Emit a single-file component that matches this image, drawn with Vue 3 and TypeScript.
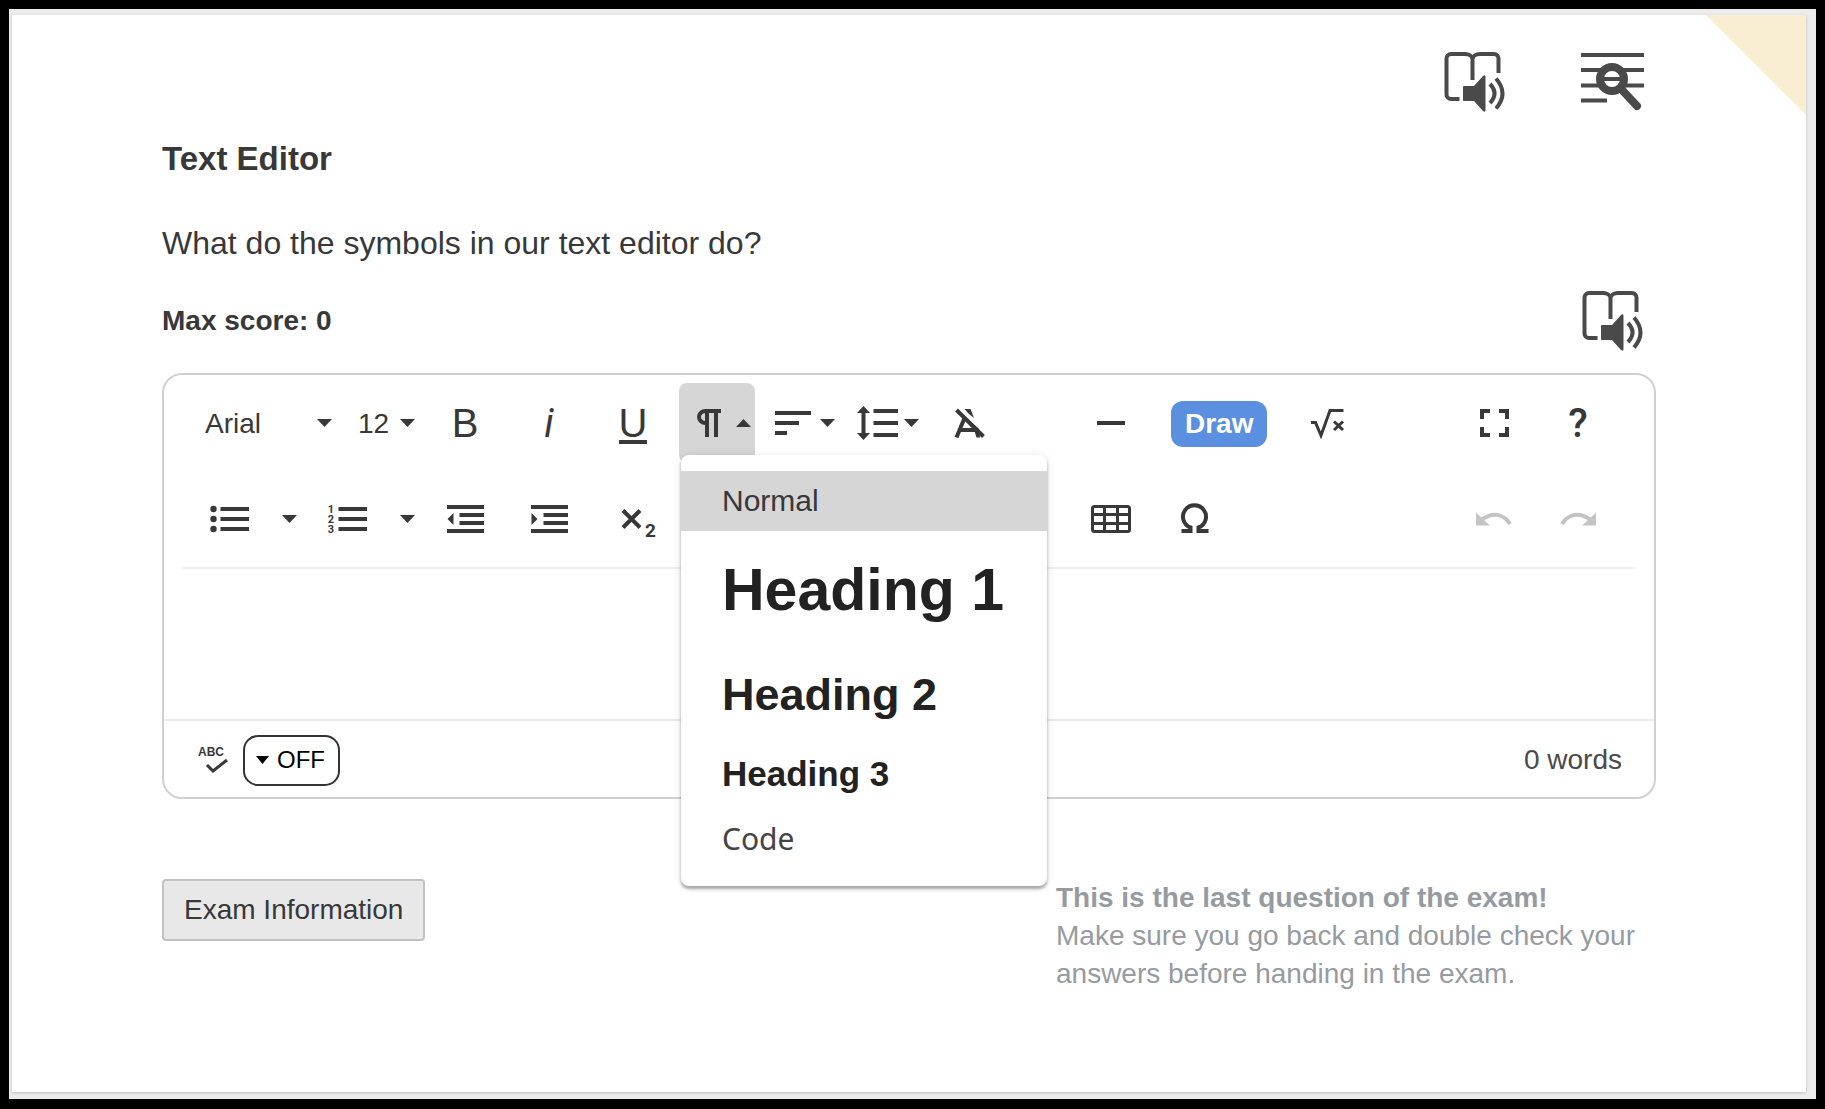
<script setup lang="ts">
import { ref } from 'vue'

interface ParagraphFormat {
  id: string
  label: string
}

const formats: ParagraphFormat[] = [
  { id: 'normal', label: 'Normal' },
  { id: 'h1', label: 'Heading 1' },
  { id: 'h2', label: 'Heading 2' },
  { id: 'h3', label: 'Heading 3' },
  { id: 'code', label: 'Code' },
]

const activeFormat = ref('normal')
const menuOpen = ref(true)
const font = ref('Arial')
const size = ref('12')

function pick(id: string): void {
  activeFormat.value = id
}
</script>

<template>
  <div class="frame">
    <main class="card">
      <div class="corner" aria-hidden="true"></div>

      <header class="tools">
        <button type="button" class="plain" aria-label="Read page aloud">
          <svg width="62" height="62" viewBox="0 0 62 62">
            <path class="ln" d="M15.500 48H7a4.500 4.500 0 0 1-4.500-4.500V7.500A4.500 4.500 0 0 1 7 3h14c4 0 7 2 7.500 5 .5-3 3.500-5 7.500-5h14a4.500 4.500 0 0 1 4.500 4.500V22M28.500 7v22M46 33q9 9.500 0 19M52 27.500q13 15 0 30" />
            <path class="solid" d="M20 35h10l9-10q2.500-2 2.500 1v33q0 3-2.500 1l-9-10H20q-1 0-1-1V36q0-1 1-1z" />
          </svg>
        </button>
        <button type="button" class="plain" aria-label="Search in text">
          <svg width="63" height="62" viewBox="0 0 63 62">
            <path class="ln" d="M0 4h63M0 19h63M0 34.500h63M0 49.500h26" />
            <circle cx="31" cy="28" r="12" fill="#fff" stroke="#4a4a4a" stroke-width="8" />
            <path class="ln" d="M22 28h18" />
            <path d="M42 40l14 15" fill="none" stroke="#4a4a4a" stroke-width="8" stroke-linecap="round" />
          </svg>
        </button>
      </header>

      <h1>Text Editor</h1>
      <p class="question">What do the symbols in our text editor do?</p>

      <div class="score">
        <strong>Max score: 0</strong>
        <button type="button" class="plain" aria-label="Read question aloud">
          <svg width="62" height="62" viewBox="0 0 62 62">
            <path class="ln" d="M15.500 48H7a4.500 4.500 0 0 1-4.500-4.500V7.500A4.500 4.500 0 0 1 7 3h14c4 0 7 2 7.500 5 .5-3 3.500-5 7.500-5h14a4.500 4.500 0 0 1 4.500 4.500V22M28.500 7v22M46 33q9 9.500 0 19M52 27.500q13 15 0 30" />
            <path class="solid" d="M20 35h10l9-10q2.500-2 2.500 1v33q0 3-2.500 1l-9-10H20q-1 0-1-1V36q0-1 1-1z" />
          </svg>
        </button>
      </div>

      <section class="editor">
        <div class="toolbar">
          <div class="group">
            <label class="pick pick-font">
              <select v-model="font" aria-label="Font family">
                <option>Arial</option>
                <option>Georgia</option>
              </select>
              <svg class="caret" width="15" height="8" viewBox="0 0 15 8"><path d="M0 0h15L7.500 8z" /></svg>
            </label>
            <label class="pick pick-size">
              <select v-model="size" aria-label="Font size">
                <option>12</option>
                <option>14</option>
              </select>
              <svg class="caret" width="15" height="8" viewBox="0 0 15 8"><path d="M0 0h15L7.500 8z" /></svg>
            </label>
            <button type="button" class="cell" aria-label="Bold">
              <svg width="48" height="48"><text x="24" y="38" class="glyph letter">B</text></svg>
            </button>
            <button type="button" class="cell" aria-label="Italic">
              <svg width="48" height="48"><text x="24" y="38" class="glyph italic">i</text></svg>
            </button>
            <button type="button" class="cell" aria-label="Underline">
              <svg width="48" height="48">
                <text x="24" y="38" class="glyph letter">U</text>
                <path class="s4" d="M10 43h28" />
              </svg>
            </button>
            <div class="format">
              <button type="button" class="wide open" aria-label="Paragraph format" aria-haspopup="listbox" :aria-expanded="menuOpen" @click="menuOpen = !menuOpen">
                <svg width="76" height="48">
                  <path class="s4" d="M42 12H26.500a6.500 6 0 0 0 0 12H28M28 12v26M37 12v26" />
                  <path class="fill" d="M57 28h15l-7.500-8z" />
                </svg>
              </button>
              <ul v-if="menuOpen" class="menu" role="listbox" aria-label="Paragraph format">
                <li v-for="f in formats" :key="f.id">
                  <button type="button" role="option" :class="['item', f.id, { active: f.id === activeFormat }]" :aria-selected="f.id === activeFormat" @click="pick(f.id)">{{ f.label }}</button>
                </li>
              </ul>
            </div>
            <button type="button" class="wide" aria-label="Align">
              <svg width="76" height="48">
                <path class="s4" d="M12 14h36M12 24h24M12 34h12" />
                <path class="fill" d="M57 20h15l-7.500 8z" />
              </svg>
            </button>
            <button type="button" class="wide" aria-label="Line height">
              <svg width="76" height="48">
                <path class="s4" d="M26.500 12H51M26.500 24H51M26.500 36H51M16.500 12v24" />
                <path class="fill" d="M10 14l6.500-7 6.500 7zM10 34l6.500 7 6.500-7zM57 20h15l-7.500 8z" />
              </svg>
            </button>
            <button type="button" class="cell" aria-label="Clear formatting">
              <svg width="48" height="48">
                <path class="s4" d="M11.500 38.500l8-19.500M15.500 31h17" />
                <path class="fill" d="M19.500 10h6l3.500 9-5-4zM27 24l7 6 1 8.500h-3.500z" />
                <path class="s4" d="M11.500 11l27 26.500" />
              </svg>
            </button>
          </div>
          <div class="group">
            <button type="button" class="cell" aria-label="Horizontal line">
              <svg width="48" height="48"><path class="s4" d="M10 24h28" /></svg>
            </button>
            <button type="button" class="draw">Draw</button>
            <button type="button" class="cell" aria-label="Formula">
              <svg width="48" height="48">
                <path class="s3" d="M8 23.500h4.500l5.500 13 9-25H40.500M31 22.500l9 8.500M40 22.500L31 31" />
              </svg>
            </button>
          </div>
          <div class="group">
            <button type="button" class="cell" aria-label="Fullscreen">
              <svg width="48" height="48"><path class="s4" d="M12 20v-8h8M29 12h8v8M37 28v8h-8M20 36h-8v-8" /></svg>
            </button>
            <button type="button" class="cell" aria-label="Help">
              <svg width="48" height="48"><text x="24" y="38" class="glyph">?</text></svg>
            </button>
          </div>

          <div class="group">
            <button type="button" class="cell" aria-label="Bullet list">
              <svg width="48" height="48">
                <path class="s4" d="M15.500 14H44M15.500 24H44M15.500 34H44" />
                <circle cx="8.500" cy="14" r="3.200" /><circle cx="8.500" cy="24" r="3.200" /><circle cx="8.500" cy="34" r="3.200" />
              </svg>
            </button>
            <button type="button" class="drop" aria-label="Bullet styles">
              <svg width="15" height="8" viewBox="0 0 15 8"><path class="fill" d="M0 0h15L7.500 8z" /></svg>
            </button>
            <button type="button" class="cell" aria-label="Numbered list">
              <svg width="48" height="48">
                <path class="s4" d="M15.500 14H44M15.500 24H44M15.500 34H44" />
                <text x="8" y="18" class="digit">1</text><text x="8" y="28" class="digit">2</text><text x="8" y="38" class="digit">3</text>
              </svg>
            </button>
            <button type="button" class="drop" aria-label="Number styles">
              <svg width="15" height="8" viewBox="0 0 15 8"><path class="fill" d="M0 0h15L7.500 8z" /></svg>
            </button>
            <button type="button" class="cell" aria-label="Decrease indent">
              <svg width="48" height="48">
                <path class="s4" d="M6 12h37M18.500 20H43M18.500 28H43M6 36h37" />
                <path class="fill" d="M6.500 24l6-6v12z" />
              </svg>
            </button>
            <button type="button" class="cell" aria-label="Increase indent">
              <svg width="48" height="48">
                <path class="s4" d="M6 12h37M18.500 20H43M18.500 28H43M6 36h37" />
                <path class="fill" d="M12.500 24l-6-6v12z" />
              </svg>
            </button>
            <button type="button" class="cell" aria-label="Subscript">
              <svg width="48" height="48">
                <path class="s4" d="M14 15.500l17 17M31 15.500l-17 17" />
                <text x="41.500" y="42" class="sub">2</text>
              </svg>
            </button>
          </div>
          <div class="group">
            <button type="button" class="cell" aria-label="Table">
              <svg width="48" height="48">
                <rect x="5.500" y="11.500" width="37" height="25" rx="2" class="s3" />
                <path class="s3" d="M17.500 11v26M30.500 11v26M5 19.500h38M5 28.500h38" />
              </svg>
            </button>
            <button type="button" class="cell" aria-label="Special characters">
              <svg width="48" height="48"><path class="s4" d="M10.500 36h9v-3.500a11.500 11.500 0 1 1 8 0V36H37.500" /></svg>
            </button>
          </div>
          <div class="group">
            <button type="button" class="cell" aria-label="Undo" disabled>
              <svg width="48" height="48">
                <path class="faint" d="M11 25q14-10 25-1 2 2 4 5" />
                <path class="faint-fill" d="M6 17.500l14 13H6z" />
              </svg>
            </button>
            <button type="button" class="cell" aria-label="Redo" disabled>
              <svg width="48" height="48">
                <path class="faint" d="M37 25q-14-10-25-1-2 2-4 5" />
                <path class="faint-fill" d="M42 17.500l-14 13h14z" />
              </svg>
            </button>
          </div>
        </div>

        <textarea class="area" aria-label="Answer"></textarea>

        <footer class="status">
          <div class="spell">
            <span class="abc">ABC</span>
            <svg width="24" height="16" viewBox="0 0 24 16"><path class="s3" d="M2 7l6 6L22 2" /></svg>
          </div>
          <button type="button" class="off" aria-haspopup="listbox">
            <svg width="13" height="8" viewBox="0 0 13 8"><path d="M0 0h13L6.500 8z" /></svg>
            OFF
          </button>
          <span class="words">0 words</span>
        </footer>
      </section>

      <div class="bottom">
        <button type="button" class="info">Exam Information</button>
        <p class="note">
          <strong>This is the last question of the exam!</strong><br />
          Make sure you go back and double check your answers before handing in the exam.
        </p>
      </div>
    </main>
  </div>
</template>

<style>
body {
  margin: 0;
  background: #000;
}
</style>

<style scoped>
.frame {
  box-sizing: border-box;
  display: flex;
  min-height: 100vh;
  padding: 6px 10px 7px 3px;
  border: 9px solid #000;
  border-bottom-width: 10px;
  background: #ececec;
  font-family: "Liberation Sans", Arial, sans-serif;
  color: #383838;
}
.card {
  position: relative;
  flex: 1;
  padding: 36px 150px 0;
  background: #fff;
  box-shadow: 0 1px 3px rgba(0, 0, 0, 0.2);
}
.corner {
  position: absolute;
  top: 0;
  right: 0;
  width: 100px;
  height: 100px;
  background: #f9edd2;
  clip-path: polygon(0 0, 100% 0, 100% 100%);
}
button,
select {
  font-family: inherit;
  color: inherit;
}
svg {
  display: block;
  flex: none;
}
.plain {
  padding: 0;
  border: 0;
  background: none;
}
.ln {
  fill: none;
  stroke: #4a4a4a;
  stroke-width: 4px;
}
.solid {
  fill: #4a4a4a;
}
.tools {
  display: flex;
  justify-content: flex-end;
  gap: 75px;
  padding-right: 12px;
}
h1 {
  margin: 26px 0 0;
  font-size: 33px;
  line-height: 40px;
}
.question {
  margin: 44px 0 0;
  font-size: 32px;
  line-height: 40px;
}
.score {
  display: flex;
  align-items: center;
  justify-content: space-between;
  margin-top: 27px;
  padding-right: 12px;
  font-size: 28px;
}
.editor {
  margin-top: 21px;
  border: 2px solid #d0d0d0;
  border-radius: 20px;
}
.toolbar {
  display: grid;
  grid-template-columns: auto 1fr auto;
  column-gap: 58px;
  margin: 0 18px;
  padding: 0 16px 0 5px;
  border-bottom: 2px solid #f0f0f0;
}
.group {
  display: flex;
  align-items: center;
  height: 96px;
}
.cell,
.wide,
.drop {
  display: flex;
  align-items: center;
  justify-content: center;
  width: 84px;
  height: 80px;
  padding: 0;
  border: 0;
  background: none;
}
.wide {
  width: 76px;
  margin: 0 4px;
  border-radius: 8px;
}
.drop {
  width: 34px;
  padding-left: 2px;
}
.open {
  background: #d6d6d6;
}
.s4,
.s3 {
  fill: none;
  stroke: #383838;
  stroke-width: 4px;
}
.s3 {
  stroke-width: 3px;
}
.fill,
.cell circle,
.caret {
  fill: #383838;
}
.faint {
  fill: none;
  stroke: #c4c4c4;
  stroke-width: 4px;
}
.faint-fill {
  fill: #c4c4c4;
}
.glyph,
.digit,
.sub {
  fill: #383838;
  font-family: Roboto, sans-serif;
  font-size: 40px;
  font-weight: 500;
  text-anchor: middle;
}
.letter {
  font-family: "Liberation Sans", Arial, sans-serif;
  font-weight: 400;
}
.italic {
  font-style: italic;
  font-weight: 400;
}
.digit {
  font-size: 11px;
  font-weight: 700;
}
.sub {
  font-size: 19px;
  font-weight: 700;
}
.pick {
  display: grid;
  align-items: center;
}
.pick > * {
  grid-area: 1 / 1;
}
.pick-font {
  width: 153px;
}
.pick-size {
  width: 83px;
}
.pick select {
  width: 100%;
  height: 80px;
  padding: 0 0 0 18px;
  border: 0;
  background: none;
  appearance: none;
  font-size: 28px;
}
.caret {
  justify-self: end;
  margin-right: 8px;
  pointer-events: none;
}
.draw {
  height: 46px;
  margin: 2px 18px 0;
  padding: 0 14px;
  border: 0;
  border-radius: 12px;
  background: #5a90df;
  color: #fff;
  font-size: 28px;
  font-weight: 700;
}
.format {
  position: relative;
}
.menu {
  position: absolute;
  z-index: 2;
  top: 72px;
  left: 6px;
  width: 366px;
  margin: 0;
  padding: 16px 0 15px;
  border-radius: 8px;
  background: #fff;
  box-shadow: 0 3px 3px rgba(0, 0, 0, 0.3), 0 1px 8px rgba(0, 0, 0, 0.12);
  list-style: none;
}
.item {
  display: block;
  width: 100%;
  padding: 0 41px;
  border: 0;
  background: none;
  color: #222;
  font-size: 30px;
  font-weight: 700;
  line-height: 60px;
  text-align: left;
  white-space: nowrap;
}
.active {
  background: #d6d6d6;
}
.normal {
  color: #383838;
  font-weight: 400;
}
.h1 {
  font-size: 59px;
  line-height: 118px;
}
.h2 {
  font-size: 45px;
  line-height: 92px;
}
.h3 {
  font-size: 35px;
  line-height: 66px;
}
.code {
  color: #444;
  font-family: "Noto Sans", sans-serif;
  font-weight: 400;
  line-height: 64px;
}
.area {
  display: block;
  box-sizing: border-box;
  width: 100%;
  height: 150px;
  padding: 16px 24px;
  border: 0;
  outline: 0;
  background: none;
  resize: none;
  font: 28px "Liberation Sans", Arial, sans-serif;
}
.status {
  display: flex;
  align-items: center;
  height: 74px;
  padding: 2px 32px 0 34px;
  border-top: 2px solid #ececec;
}
.spell {
  display: flex;
  flex-direction: column;
  align-items: flex-end;
  width: 31px;
}
.abc {
  align-self: flex-start;
  font-size: 12px;
  font-weight: 700;
  line-height: 12px;
}
.off {
  display: flex;
  align-items: center;
  gap: 8px;
  height: 51px;
  margin-left: 14px;
  padding: 0 13px 0 11px;
  border: 2px solid #333;
  border-radius: 15px;
  background: #fff;
  color: #000;
  font-size: 24px;
}
.words {
  margin-left: auto;
  font-size: 28px;
  color: #4a4a4a;
}
.bottom {
  display: flex;
  justify-content: space-between;
  align-items: flex-start;
  margin-top: 80px;
}
.info {
  height: 62px;
  padding: 0 20px;
  border: 2px solid #c2c2c2;
  border-radius: 4px;
  background: #e8e8e8;
  font-size: 28px;
}
.note {
  flex: 0 1 600px;
  margin: 0;
  color: #959ba1;
  font-size: 28px;
  line-height: 38px;
}
</style>
